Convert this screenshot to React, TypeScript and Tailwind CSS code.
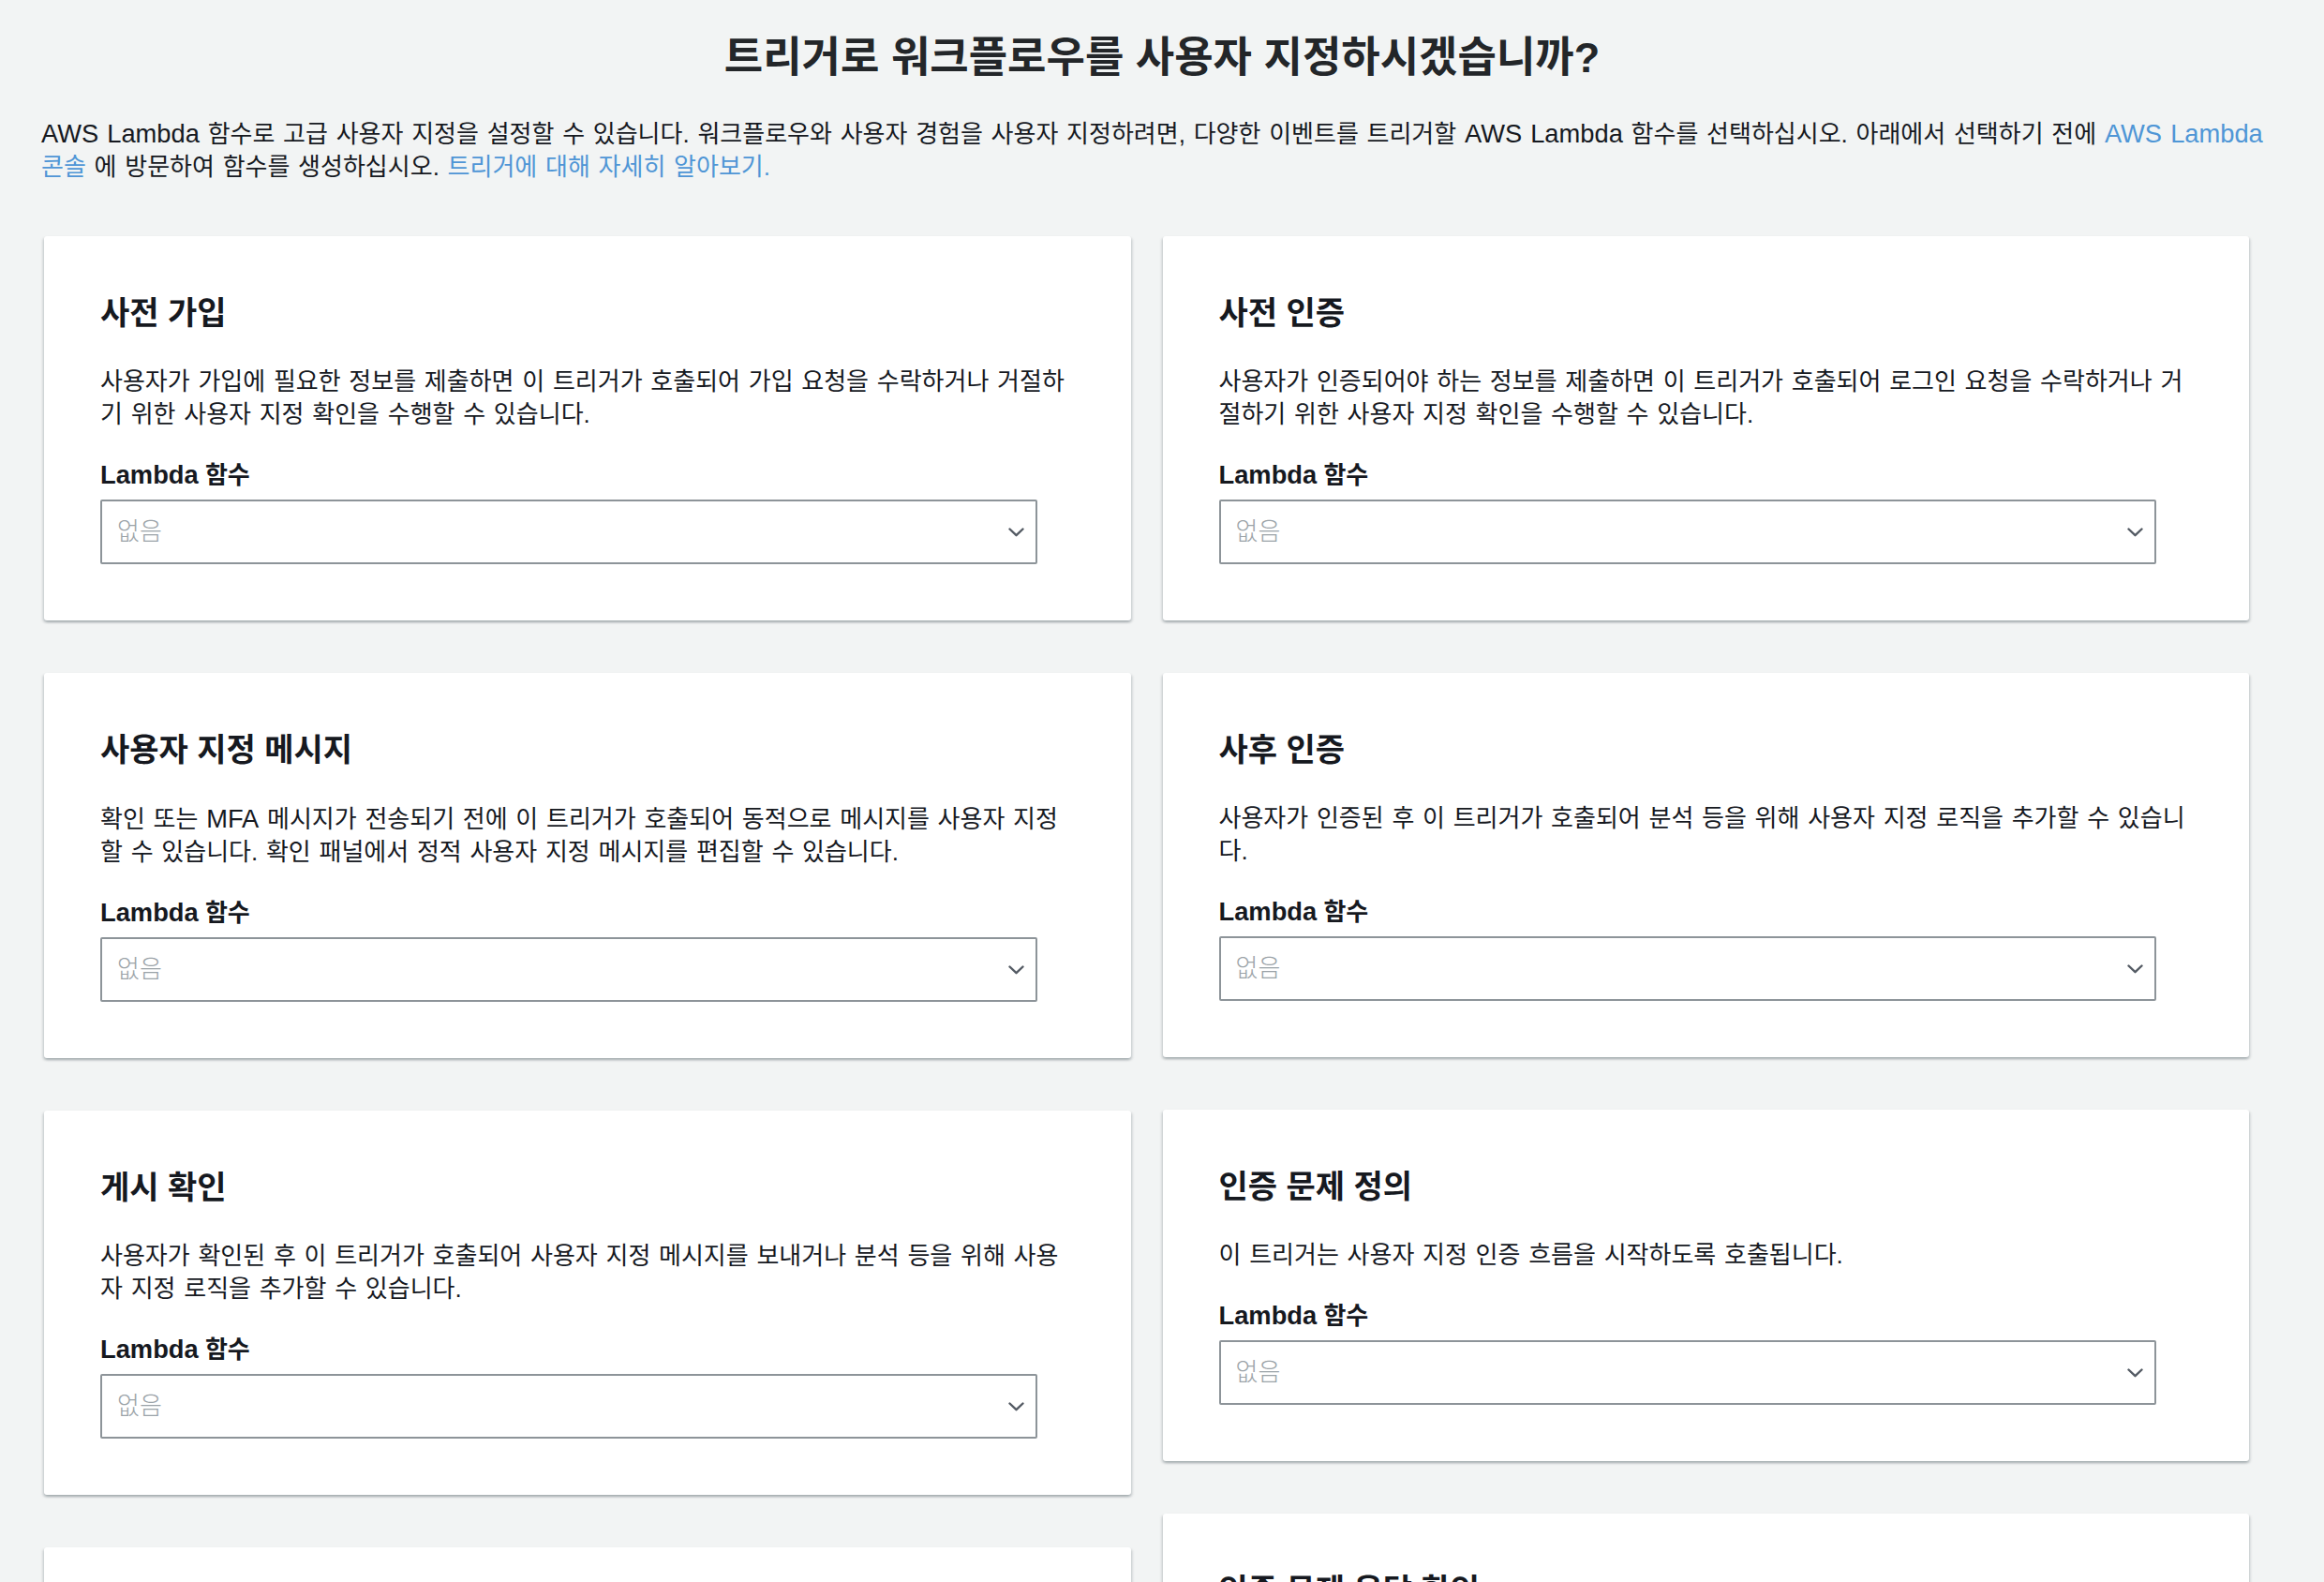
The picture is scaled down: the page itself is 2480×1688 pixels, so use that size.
import * as React from 'react';

type Trigger = {
  title: string;
  lines: string[];
};

const leftColumn: Trigger[] = [
  {
    title: '사전 가입',
    lines: [
      '사용자가 가입에 필요한 정보를 제출하면 이 트리거가 호출되어 가입 요청을 수락하거나 거절하',
      '기 위한 사용자 지정 확인을 수행할 수 있습니다.',
    ],
  },
  {
    title: '사용자 지정 메시지',
    lines: [
      '확인 또는 MFA 메시지가 전송되기 전에 이 트리거가 호출되어 동적으로 메시지를 사용자 지정',
      '할 수 있습니다. 확인 패널에서 정적 사용자 지정 메시지를 편집할 수 있습니다.',
    ],
  },
  {
    title: '게시 확인',
    lines: [
      '사용자가 확인된 후 이 트리거가 호출되어 사용자 지정 메시지를 보내거나 분석 등을 위해 사용',
      '자 지정 로직을 추가할 수 있습니다.',
    ],
  },
  {
    title: '인증 문제 생성',
    lines: ['이 트리거는 사용자 지정 인증 흐름의 일부로 인증 문제를 생성하도록 호출됩니다.'],
  },
];

const rightColumn: Trigger[] = [
  {
    title: '사전 인증',
    lines: [
      '사용자가 인증되어야 하는 정보를 제출하면 이 트리거가 호출되어 로그인 요청을 수락하거나 거',
      '절하기 위한 사용자 지정 확인을 수행할 수 있습니다.',
    ],
  },
  {
    title: '사후 인증',
    lines: [
      '사용자가 인증된 후 이 트리거가 호출되어 분석 등을 위해 사용자 지정 로직을 추가할 수 있습니',
      '다.',
    ],
  },
  {
    title: '인증 문제 정의',
    lines: ['이 트리거는 사용자 지정 인증 흐름을 시작하도록 호출됩니다.'],
  },
  {
    title: '인증 문제 응답 확인',
    lines: ['이 트리거는 사용자가 제공한 인증 문제 응답이 올바른지 확인하도록 호출됩니다.'],
  },
];

// Latin runs are set a bit larger so they sit like the Helvetica in the original
function Mixed({ text }: { text: string }) {
  const parts = text.split(/([A-Za-z]+(?: [A-Za-z]+)*)/);
  return (
    <>
      {parts.map((part, i) =>
        /^[A-Za-z]/.test(part) ? (
          <span key={i} className="text-[1.05em]">
            {part}
          </span>
        ) : (
          <React.Fragment key={i}>{part}</React.Fragment>
        )
      )}
    </>
  );
}

function ChevronDown() {
  return (
    <svg width="17" height="10" viewBox="0 0 17 10" fill="none" className="shrink-0">
      <path d="M1.5 1.5 L8.5 8.2 L15.5 1.5" stroke="#545b64" strokeWidth="2.4" strokeLinecap="round" strokeLinejoin="round" />
    </svg>
  );
}

function TriggerCard({ trigger }: { trigger: Trigger }) {
  return (
    <div className="bg-white rounded-[3px] px-[60px] pt-[62px] pb-[60px] shadow-[0_2px_3px_0_rgba(0,28,36,0.22),2px_2px_3px_0_rgba(0,28,36,0.08),-2px_2px_3px_0_rgba(0,28,36,0.08)]">
      {/* Header */}
      <h2 className="text-[34px] leading-[40px] font-bold text-[#16191f]">{trigger.title}</h2>

      {/* Description */}
      <p className="mt-[36px] text-[26px] leading-[35px] text-[#16191f] whitespace-nowrap [word-spacing:1.5px]">
        {trigger.lines.map((line, i) => (
          <React.Fragment key={i}>
            {i > 0 && <br />}
            <Mixed text={line} />
          </React.Fragment>
        ))}
      </p>

      {/* Lambda select */}
      <div className="mt-[29px] text-[26px] leading-[35px] font-bold text-[#16191f]">
        <Mixed text="Lambda 함수" />
      </div>
      <button
        type="button"
        className="mt-[8px] h-[69px] w-[1000px] max-w-full flex items-center justify-between pl-[16px] pr-[12px] bg-white border-2 border-[#8d9499] rounded-[2px] text-left"
      >
        <span className="text-[26px] font-light text-[#9ba3a8]">없음</span>
        <ChevronDown />
      </button>
    </div>
  );
}

export default function App() {
  return (
    <div className="min-h-screen bg-[#f2f4f4] font-['Liberation_Sans','Noto_Sans_CJK_KR',sans-serif] text-[#16191f] pb-[80px]">
      <div className="pt-[36px] px-[44px]">
        <h1 className="text-center text-[45px] leading-[52px] font-bold text-[#232629]">
          트리거로 워크플로우를 사용자 지정하시겠습니까?
        </h1>
        <p className="mt-[37px] text-[26px] leading-[35px] whitespace-nowrap [word-spacing:1.5px]">
          <Mixed text="AWS Lambda 함수로 고급 사용자 지정을 설정할 수 있습니다. 워크플로우와 사용자 경험을 사용자 지정하려면, 다양한 이벤트를 트리거할 AWS Lambda 함수를 선택하십시오. 아래에서 선택하기 전에 " />
          <a href="#" className="text-[#4f96d6]">
            <Mixed text="AWS Lambda" />
            <br />
            콘솔
          </a>{' '}
          에 방문하여 함수를 생성하십시오.{' '}
          <a href="#" className="text-[#4f96d6]">
            트리거에 대해 자세히 알아보기.
          </a>
        </p>
      </div>

      {/* Trigger cards, two independent columns */}
      <div className="mt-[56px] pl-[47px] pr-[80px] grid grid-cols-2 gap-x-[34px] items-start">
        <div className="flex flex-col gap-[56px]">
          {leftColumn.map((t) => (
            <TriggerCard key={t.title} trigger={t} />
          ))}
        </div>
        <div className="flex flex-col gap-[56px]">
          {rightColumn.map((t) => (
            <TriggerCard key={t.title} trigger={t} />
          ))}
        </div>
      </div>
    </div>
  );
}
